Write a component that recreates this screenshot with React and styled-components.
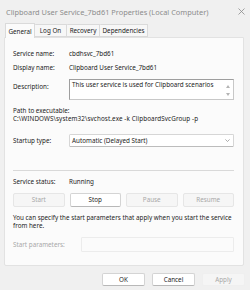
import React from "react";
import styled, { createGlobalStyle } from "styled-components";

const Global = createGlobalStyle`
  html, body { margin: 0; padding: 0; background: #eeeeee; }
  body { font-family: "Noto Sans", "Open Sans", sans-serif; }
`;

const Window = styled.div`
  width: 250px;
  height: 290px;
  background: #f0f0f0;
  display: flex;
  flex-direction: column;
  color: #1c1c1c;
  font-size: 6.3px;
  overflow: hidden;
`;

const TitleBar = styled.div`
  height: 23px;
  display: flex;
  align-items: center;
  justify-content: space-between;
  padding: 0 5px 0 6px;
  box-sizing: border-box;
`;

const Title = styled.span`
  font-size: 7.4px;
  color: #8c8c8c;
`;

const CloseIcon = () => (
  <svg width="7" height="7" viewBox="0 0 7 7">
    <path d="M0.5 0.5 L6.5 6.5 M6.5 0.5 L0.5 6.5" stroke="#8c8c8c" strokeWidth="0.8" />
  </svg>
);

const TabStrip = styled.div`
  display: flex;
  align-items: flex-end;
  height: 14px;
  padding-left: 5px;
  position: relative;
  z-index: 1;
`;

const Tab = styled.div`
  width: ${(p) => p.$w}px;
  height: ${(p) => (p.$active ? "15px" : "13px")};
  box-sizing: border-box;
  display: flex;
  align-items: center;
  justify-content: center;
  background: ${(p) => (p.$active ? "#fbfbfb" : "#f7f7f7")};
  border: 1px solid #dadada;
  border-bottom: ${(p) => (p.$active ? "none" : "1px solid #dadada")};
  border-left: ${(p) => (p.$active ? "1px solid #dadada" : "none")};
  margin-bottom: ${(p) => (p.$active ? "-1px" : "0")};
  border-radius: 1px 1px 0 0;
  white-space: nowrap;
`;

const Panel = styled.div`
  margin: 0 6px 0 4px;
  height: 229px;
  box-sizing: border-box;
  background: #fbfbfb;
  border: 1px solid #e2e2e2;
  border-radius: 0 0 2px 2px;
  padding: 0 9px 0 8px;
  display: flex;
  flex-direction: column;
`;

const Row = styled.div`
  display: flex;
  align-items: ${(p) => (p.$top ? "flex-start" : "center")};
  height: ${(p) => p.$h}px;
  margin-top: ${(p) => p.$mt}px;
  flex-shrink: 0;
`;

const Label = styled.span`
  width: ${(p) => p.$w || 56}px;
  flex-shrink: 0;
  color: ${(p) => (p.$disabled ? "#a8a8a8" : "#1c1c1c")};
  padding-top: ${(p) => p.$pt || 0}px;
  white-space: nowrap;
`;

const Value = styled.span`
  white-space: nowrap;
`;

const TextBox = styled.div`
  flex: 1;
  height: 100%;
  box-sizing: border-box;
  background: #ffffff;
  border: 1px solid #c8c8c8;
  border-top-color: #9e9e9e;
  border-left-color: #9e9e9e;
  display: flex;
  justify-content: space-between;
  padding: 1px 2px 0 2px;
  line-height: 8px;
  white-space: nowrap;
`;

const ScrollArrows = styled.div`
  display: flex;
  flex-direction: column;
  justify-content: space-between;
  align-items: center;
  padding: 4px 1px 3px 0;
  width: 5px;
`;

const Arrow = ({ up }) => (
  <svg width="4" height="3" viewBox="0 0 4 3">
    <path d={up ? "M0 3 L2 0 L4 3 Z" : "M0 0 L4 0 L2 3 Z"} fill="#b4b4b4" />
  </svg>
);

const TextBlock = styled.div`
  margin-top: ${(p) => p.$mt}px;
  display: flex;
  flex-direction: column;
  flex-shrink: 0;
`;

const Line = styled.div`
  height: 8.6px;
  line-height: 8.6px;
  white-space: nowrap;
  letter-spacing: ${(p) => p.$ls || 0}px;
`;

const Select = styled.div`
  flex: 1;
  height: 100%;
  box-sizing: border-box;
  background: #ffffff;
  border: 1px solid #d6d6d6;
  border-bottom-color: #bcbcbc;
  border-radius: 1.5px;
  display: flex;
  align-items: center;
  justify-content: space-between;
  padding: 0 3px 0 2px;
`;

const Chevron = () => (
  <svg width="5" height="3" viewBox="0 0 5 3">
    <path d="M0.4 0.4 L2.5 2.5 L4.6 0.4" stroke="#777" strokeWidth="0.6" fill="none" />
  </svg>
);

const Separator = styled.div`
  height: 1px;
  background: #d9d9d9;
  margin-top: 23px;
  flex-shrink: 0;
`;

const ButtonRow = styled.div`
  display: grid;
  grid-template-columns: repeat(4, 1fr);
  gap: 5px;
  height: 14px;
  margin-top: 6px;
  flex-shrink: 0;
`;

const Btn = styled.div`
  box-sizing: border-box;
  display: flex;
  align-items: center;
  justify-content: center;
  border-radius: 2px;
  background: ${(p) => (p.$disabled ? "#f6f6f6" : "#ffffff")};
  border: 1px solid ${(p) => (p.$disabled ? "#e6e6e6" : "#d4d4d4")};
  border-bottom-color: ${(p) => (p.$disabled ? "#e6e6e6" : "#b8b8b8")};
  color: ${(p) => (p.$disabled ? "#a8a8a8" : "#1c1c1c")};
`;

const ParamInput = styled.div`
  flex: 1;
  height: 100%;
  box-sizing: border-box;
  background: #fbfbfb;
  border: 1px solid #ececec;
  border-radius: 1px;
`;

const Footer = styled.div`
  display: flex;
  justify-content: flex-end;
  gap: 7px;
  padding: 7px 5px 0 0;
`;

const FooterBtn = styled(Btn)`
  width: 43px;
  height: 13px;
  border-color: ${(p) => (p.$disabled ? "#efefef" : "#d4d4d4")};
  border-bottom-color: ${(p) => (p.$disabled ? "#efefef" : "#b8b8b8")};
  background: ${(p) => (p.$disabled ? "#f5f5f5" : "#ffffff")};
`;

export default function App() {
  return (
    <>
      <Global />
      <Window>
        <TitleBar>
          <Title>Clipboard User Service_7bd61 Properties (Local Computer)</Title>
          <CloseIcon />
        </TitleBar>
        <TabStrip>
          <Tab $active $w={30}>General</Tab>
          <Tab $w={32}>Log On</Tab>
          <Tab $w={33}>Recovery</Tab>
          <Tab $w={48}>Dependencies</Tab>
        </TabStrip>
        <Panel>
          <Row $h={10} $mt={10}>
            <Label>Service name:</Label>
            <Value>cbdhsvc_7bd61</Value>
          </Row>
          <Row $h={10} $mt={4}>
            <Label>Display name:</Label>
            <Value>Clipboard User Service_7bd61</Value>
          </Row>
          <Row $h={21} $mt={7} $top>
            <Label $pt={3}>Description:</Label>
            <TextBox>
              <span>This user service is used for Clipboard scenarios</span>
              <ScrollArrows>
                <Arrow up />
                <Arrow />
              </ScrollArrows>
            </TextBox>
          </Row>
          <TextBlock $mt={6.9}>
            <Line>Path to executable:</Line>
            <Line $ls={0.1}>C:\WINDOWS\system32\svchost.exe -k ClipboardSvcGroup -p</Line>
          </TextBlock>
          <Row $h={13} $mt={9.9}>
            <Label>Startup type:</Label>
            <Select>
              <span>Automatic (Delayed Start)</span>
              <Chevron />
            </Select>
          </Row>
          <Separator />
          <Row $h={10} $mt={6}>
            <Label>Service status:</Label>
            <Value>Running</Value>
          </Row>
          <ButtonRow>
            <Btn $disabled>Start</Btn>
            <Btn>Stop</Btn>
            <Btn $disabled>Pause</Btn>
            <Btn $disabled>Resume</Btn>
          </ButtonRow>
          <TextBlock $mt={6.9}>
            <Line>You can specify the start parameters that apply when you start the service</Line>
            <Line>from here.</Line>
          </TextBlock>
          <Row $h={15} $mt={5.9}>
            <Label $w={68} $disabled>Start parameters:</Label>
            <ParamInput />
          </Row>
        </Panel>
        <Footer>
          <FooterBtn>OK</FooterBtn>
          <FooterBtn>Cancel</FooterBtn>
          <FooterBtn $disabled>Apply</FooterBtn>
        </Footer>
      </Window>
    </>
  );
}
